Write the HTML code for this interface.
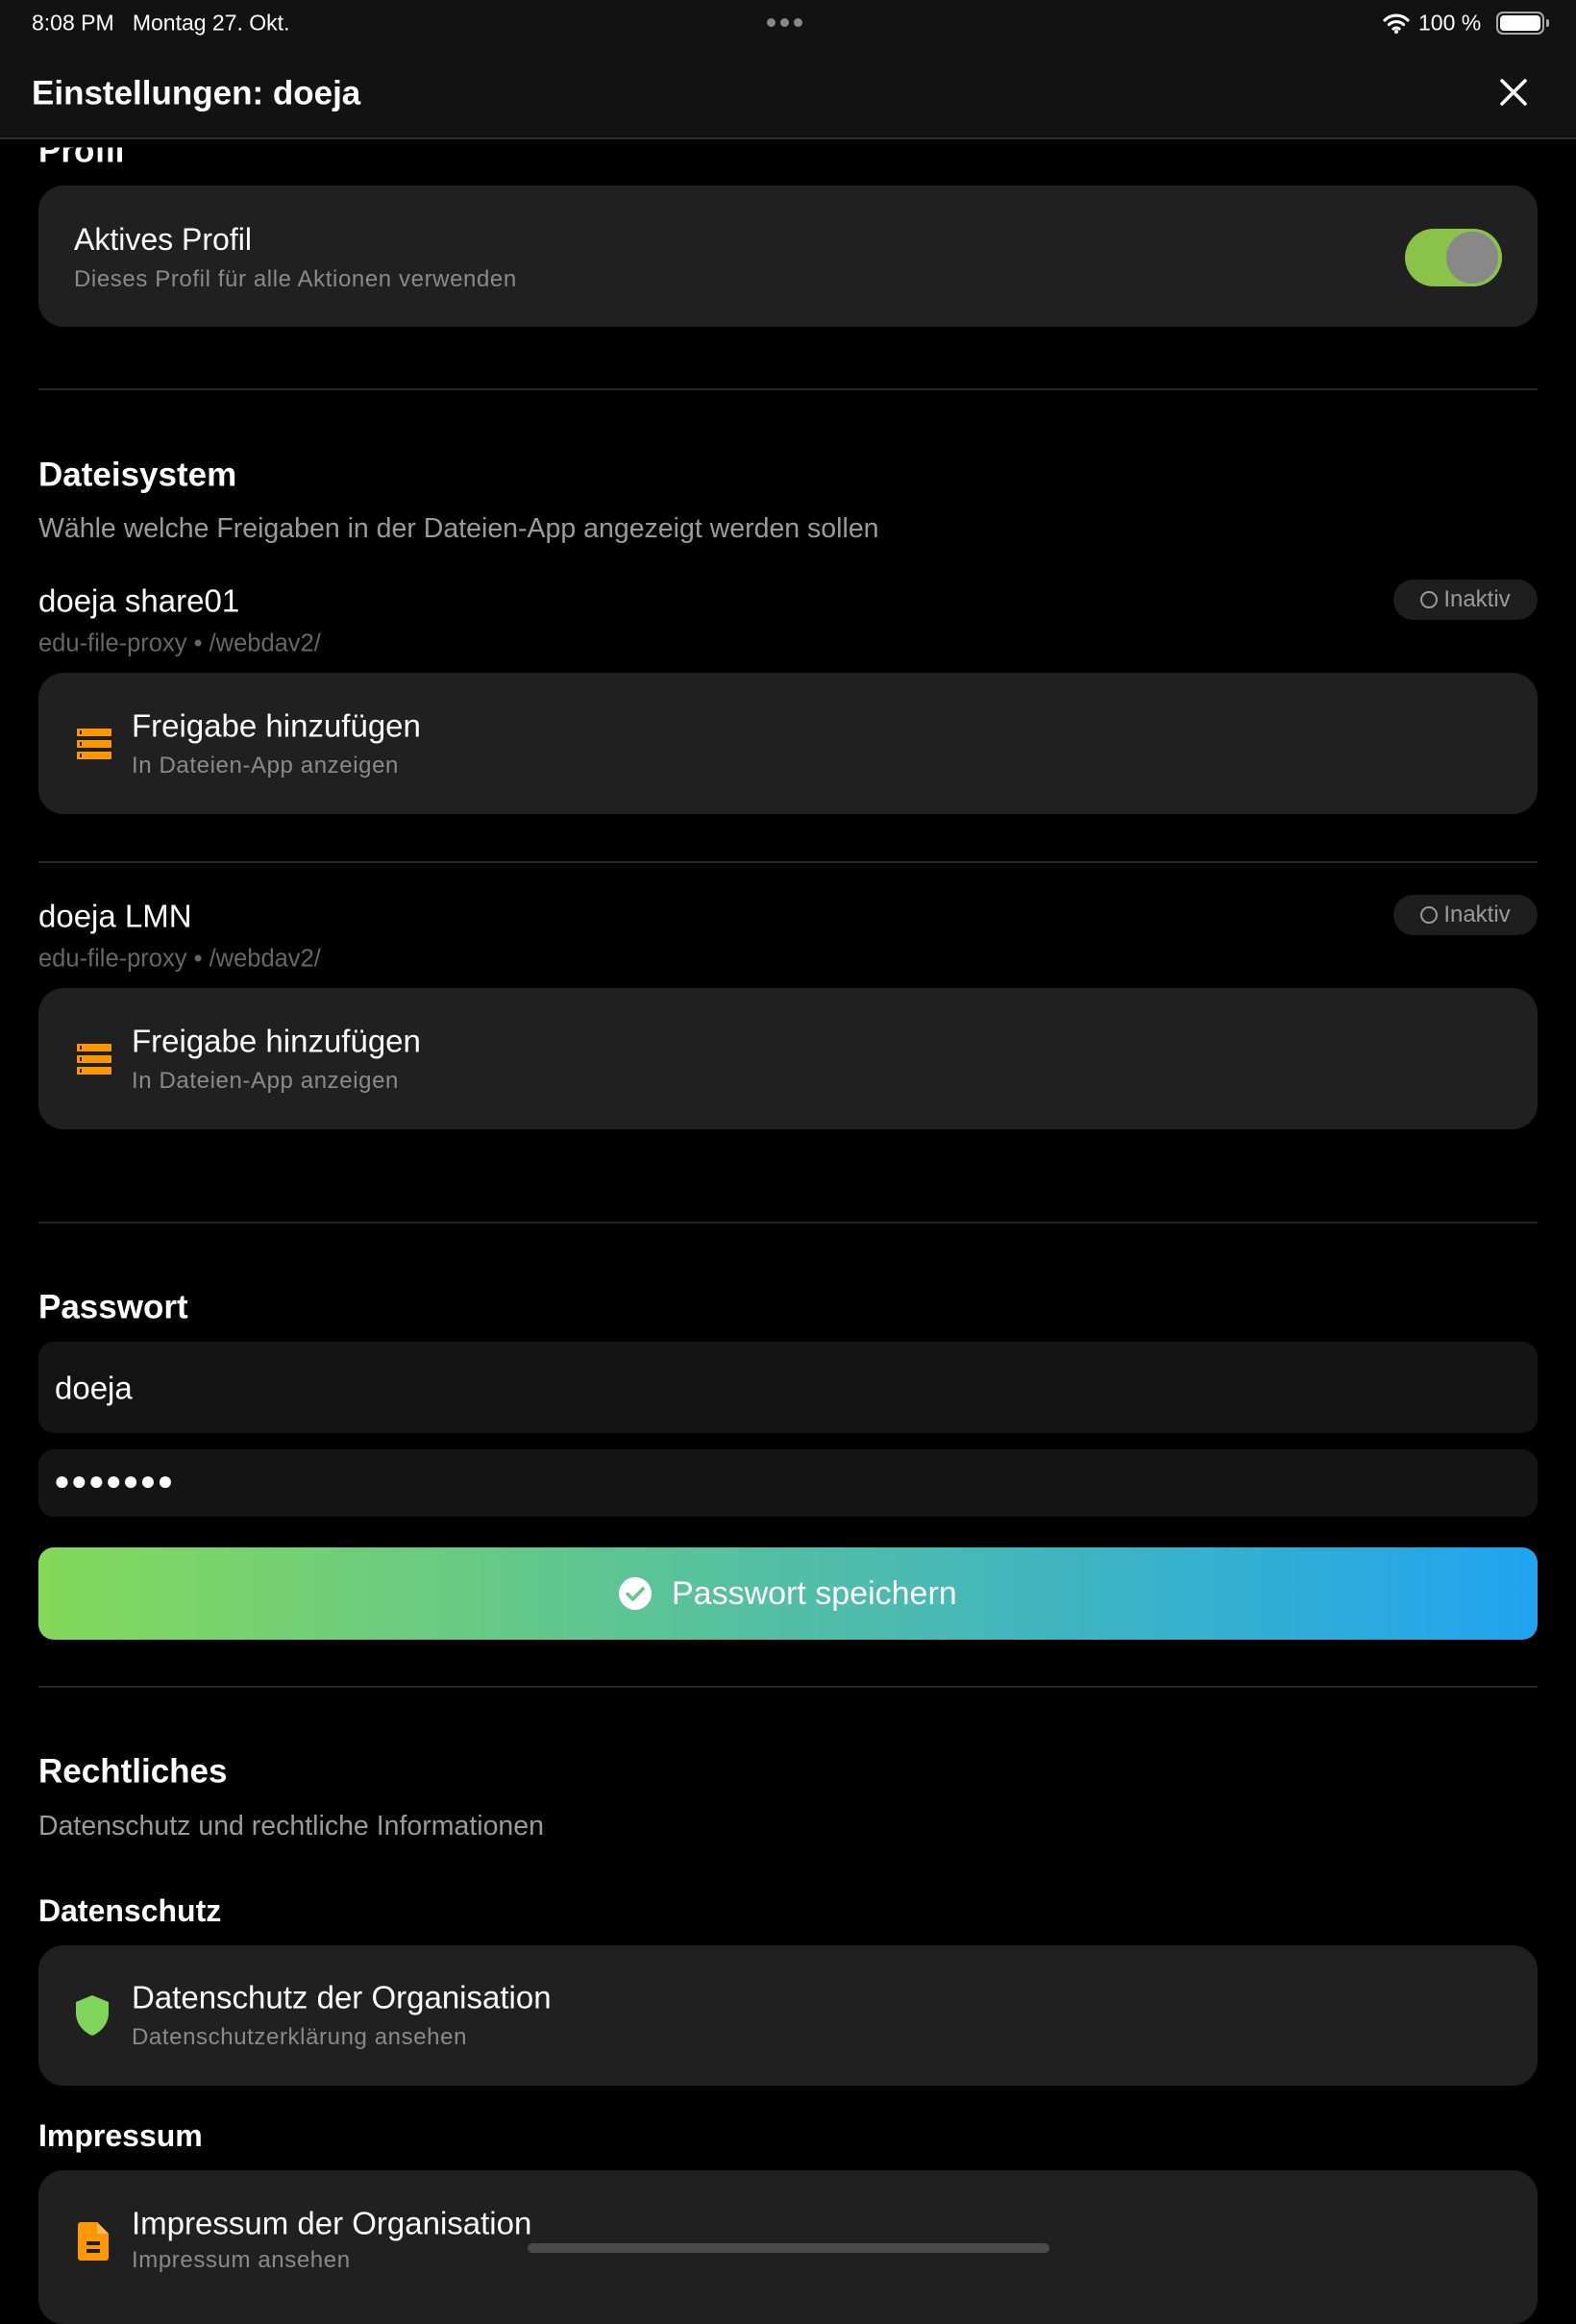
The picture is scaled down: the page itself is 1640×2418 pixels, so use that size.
<!DOCTYPE html>
<html><head><meta charset="utf-8"><style>
*{margin:0;padding:0;box-sizing:border-box}
body{width:1640px;height:2360px;background:#000;font-family:"Liberation Sans",sans-serif;color:#fff;position:relative;overflow:hidden}
.a{position:absolute;white-space:nowrap}
.t{line-height:1;transform:translateY(-50%)}
.card{position:absolute;left:40px;width:1560px;background:#202020;border-radius:26px}
.div{position:absolute;left:40px;width:1560px;height:2px;background:#262626}
.h{font-weight:bold;font-size:35px}
.sub{color:#9a9a9a;font-size:28.5px}
.ct{font-size:33px;font-weight:500}
.cs{font-size:24px;color:#8a8a8a;letter-spacing:.6px}
.pill{position:absolute;left:1450px;width:150px;height:42px;border-radius:21px;background:#1e1e1e;color:#9a9a9a;font-size:24px;display:flex;align-items:center;justify-content:center;gap:6px}
.pill i{width:18px;height:18px;border:2px solid #9a9a9a;border-radius:50%;display:inline-block}
.inp{position:absolute;left:40px;width:1560px;background:#141414;border-radius:16px}
</style></head><body>
<div class="a" style="left:0;top:0;width:1640px;height:145px;background:#121212;border-bottom:2px solid #2a2a2a"></div>
<div class="a t" style="left:33px;top:24px;font-size:23px">8:08 PM&nbsp;&nbsp;&nbsp;Montag 27. Okt.</div>
<div class="a" style="left:798px;top:19px;display:flex;gap:5px"><i style="width:9px;height:9px;border-radius:50%;background:#888"></i><i style="width:9px;height:9px;border-radius:50%;background:#888"></i><i style="width:9px;height:9px;border-radius:50%;background:#888"></i></div>
<svg class="a" style="left:1438px;top:12px" width="30" height="24" viewBox="0 0 30 24"><path d="M3 9a17 17 0 0 1 24 0M7.5 13.5a11 11 0 0 1 15 0M12 18a5 5 0 0 1 6 0" stroke="#fff" stroke-width="3.2" fill="none" stroke-linecap="round"/><circle cx="15" cy="21" r="2" fill="#fff"/></svg>
<div class="a t" style="left:1476px;top:24px;font-size:23px">100 %</div>
<div class="a" style="left:1557px;top:12px;width:50px;height:24px;border:2px solid #aaa;border-radius:7px;padding:2px"><div style="width:100%;height:100%;background:#fff;border-radius:4px"></div></div>
<div class="a" style="left:1609px;top:20px;width:3px;height:8px;background:#aaa;border-radius:0 2px 2px 0"></div>
<div class="a t" style="left:33px;top:97px;font-size:35px;font-weight:bold">Einstellungen: doeja</div>
<svg class="a" style="left:1561px;top:82px" width="28" height="28" viewBox="0 0 28 28"><path d="M2 2L26 26M26 2L2 26" stroke="#fff" stroke-width="3.5" stroke-linecap="round"/></svg>

<div class="a t h" style="left:40px;top:157px;clip-path:inset(14px 0 0 0)">Profil</div>
<div class="card" style="top:193px;height:147px"></div>
<div class="a t ct" style="left:77px;top:249px;font-size:32px">Aktives Profil</div>
<div class="a t cs" style="left:77px;top:291px">Dieses Profil für alle Aktionen verwenden</div>
<div class="a" style="left:1462px;top:238px;width:101px;height:60px;border-radius:30px;background:#8bc34a"></div>
<div class="a" style="left:1505px;top:241px;width:54px;height:54px;border-radius:50%;background:#888"></div>

<div class="div" style="top:404px"></div>
<div class="a t h" style="left:40px;top:494px">Dateisystem</div>
<div class="a t sub" style="left:40px;top:550px">Wähle welche Freigaben in der Dateien-App angezeigt werden sollen</div>

<div class="a t" style="left:40px;top:625px;font-size:33px;font-weight:500">doeja share01</div>
<div class="pill" style="top:603px"><i></i>Inaktiv</div>
<div class="a t" style="left:40px;top:670px;font-size:25.5px;color:#666">edu-file-proxy • /webdav2/</div>
<div class="card" style="top:700px;height:147px"></div>
<svg class="a" style="left:80px;top:758px" width="36" height="32" viewBox="0 0 36 32"><g fill="#ff9800"><rect x="0" y="0" width="36" height="8" rx="1"/><rect x="0" y="12" width="36" height="8" rx="1"/><rect x="0" y="24" width="36" height="8" rx="1"/></g><g fill="#202020"><rect x="3" y="2" width="2" height="4"/><rect x="3" y="14" width="2" height="4"/><rect x="3" y="26" width="2" height="4"/></g></svg>
<div class="a t ct" style="left:137px;top:755px">Freigabe hinzufügen</div>
<div class="a t cs" style="left:137px;top:797px">In Dateien-App anzeigen</div>

<div class="div" style="top:896px"></div>
<div class="a t" style="left:40px;top:953px;font-size:33px;font-weight:500">doeja LMN</div>
<div class="pill" style="top:931px"><i></i>Inaktiv</div>
<div class="a t" style="left:40px;top:998px;font-size:25.5px;color:#666">edu-file-proxy • /webdav2/</div>
<div class="card" style="top:1028px;height:147px"></div>
<svg class="a" style="left:80px;top:1086px" width="36" height="32" viewBox="0 0 36 32"><g fill="#ff9800"><rect x="0" y="0" width="36" height="8" rx="1"/><rect x="0" y="12" width="36" height="8" rx="1"/><rect x="0" y="24" width="36" height="8" rx="1"/></g><g fill="#202020"><rect x="3" y="2" width="2" height="4"/><rect x="3" y="14" width="2" height="4"/><rect x="3" y="26" width="2" height="4"/></g></svg>
<div class="a t ct" style="left:137px;top:1083px">Freigabe hinzufügen</div>
<div class="a t cs" style="left:137px;top:1125px">In Dateien-App anzeigen</div>

<div class="div" style="top:1271px"></div>
<div class="a t h" style="left:40px;top:1360px">Passwort</div>
<div class="inp" style="top:1396px;height:95px"></div>
<div class="a t" style="left:57px;top:1444px;font-size:33px">doeja</div>
<div class="inp" style="top:1508px;height:70px"></div>
<div class="a t" style="left:56px;top:1541px;font-size:28px;letter-spacing:1px">●●●●●●●</div>
<div class="a" style="left:40px;top:1610px;width:1560px;height:96px;border-radius:16px;background:linear-gradient(90deg,#84d95a,#20a4f0)"></div>
<svg class="a" style="left:644px;top:1641px" width="34" height="34" viewBox="0 0 34 34"><circle cx="17" cy="17" r="17" fill="#fff"/><path d="M9 17.5l5.5 5.5L25 12" stroke="#5fc98a" stroke-width="3.5" fill="none" stroke-linecap="round" stroke-linejoin="round"/></svg>
<div class="a t" style="left:699px;top:1658px;font-size:34px;font-weight:500">Passwort speichern</div>

<div class="div" style="top:1754px"></div>
<div class="a t h" style="left:40px;top:1843px">Rechtliches</div>
<div class="a t sub" style="left:40px;top:1900px">Datenschutz und rechtliche Informationen</div>
<div class="a t" style="left:40px;top:1988px;font-size:32px;font-weight:bold">Datenschutz</div>
<div class="card" style="top:2024px;height:146px"></div>
<svg class="a" style="left:79px;top:2076px" width="34" height="42" viewBox="0 0 34 42"><path d="M17 0L34 7V18C34 30 26 38 17 42C8 38 0 30 0 18V7Z" fill="#7fd65a"/></svg>
<div class="a t ct" style="left:137px;top:2078px">Datenschutz der Organisation</div>
<div class="a t cs" style="left:137px;top:2120px">Datenschutzerklärung ansehen</div>
<div class="a t" style="left:40px;top:2222px;font-size:32px;font-weight:bold">Impressum</div>
<div class="card" style="top:2258px;height:160px"></div>
<svg class="a" style="left:81px;top:2312px" width="32" height="40" viewBox="0 0 32 40"><path d="M3 0H20L32 12V37a3 3 0 0 1-3 3H3a3 3 0 0 1-3-3V3a3 3 0 0 1 3-3Z" fill="#ff9800"/><path d="M20 0V12H32" fill="#ffb84d"/><rect x="9" y="20" width="14" height="4" fill="#202020"/><rect x="9" y="28" width="14" height="4" fill="#202020"/></svg>
<div class="a t ct" style="left:137px;top:2313px">Impressum der Organisation</div>
<div class="a t cs" style="left:137px;top:2352px">Impressum ansehen</div>
<div class="a" style="left:549px;top:2334px;width:543px;height:10px;border-radius:5px;background:#4a4a4a"></div>
</body></html>
